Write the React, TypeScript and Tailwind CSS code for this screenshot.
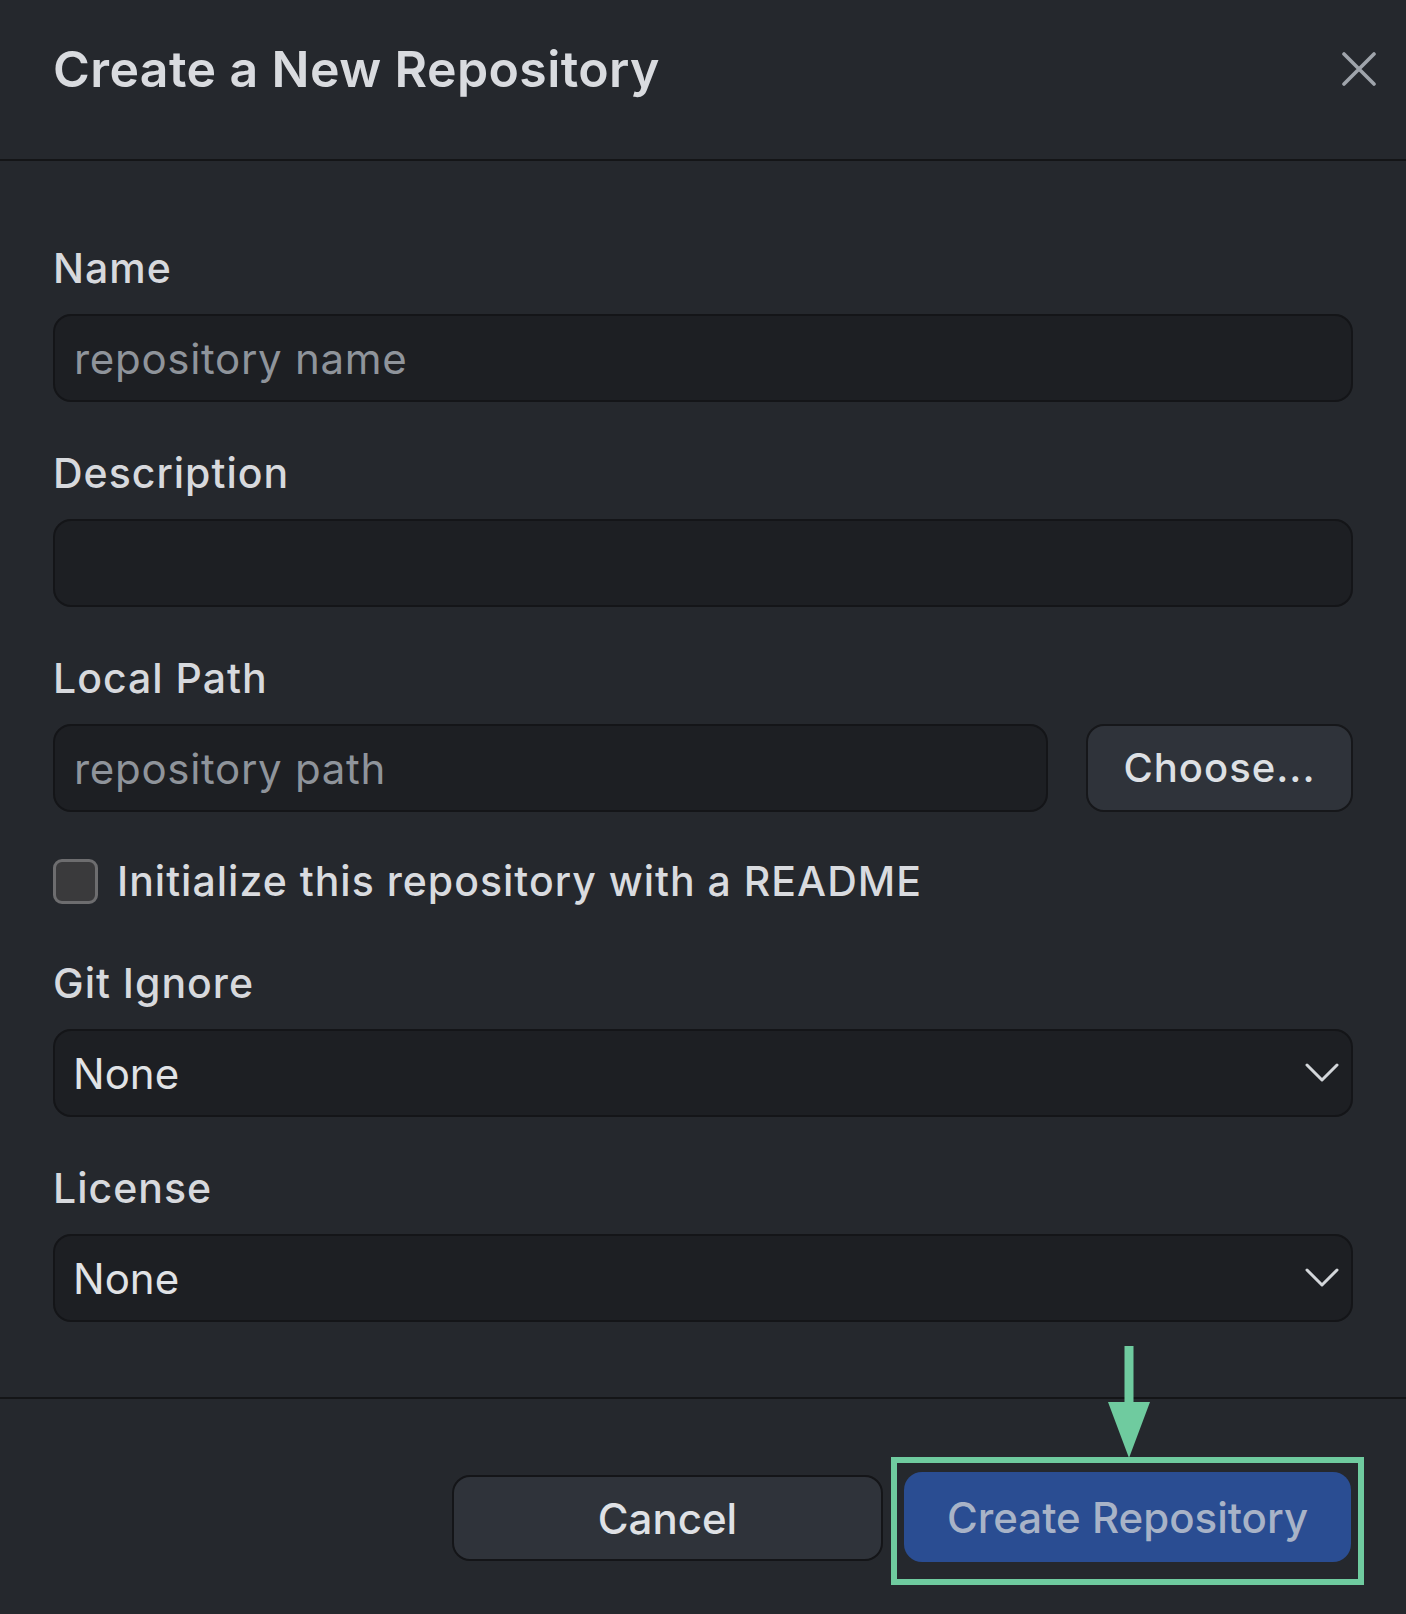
import React from "react";

const font = { fontFamily: "Inter, 'Liberation Sans', sans-serif" };

function Field({ label, children }: { label: string; children: React.ReactNode }) {
  return (
    <div className="flex flex-col">
      <label className="text-[41px] leading-[48px] font-medium tracking-[1px] text-[#d7d9dd]">{label}</label>
      <div className="mt-[22px]">{children}</div>
    </div>
  );
}

function TextInput({ placeholder }: { placeholder?: string }) {
  return (
    <input
      placeholder={placeholder}
      className="w-full h-[88px] rounded-[18px] border-2 border-[#141518] bg-[#1d1f23] pl-[19px] text-[42px] tracking-[0.7px] text-[#dfe1e5] placeholder:text-[#8f949b] outline-none"
    />
  );
}

function Select({ value }: { value: string }) {
  return (
    <div className="flex items-center justify-between w-full h-[88px] rounded-[18px] border-2 border-[#141518] bg-[#1d1f23] pl-[18px] pr-[12px]">
      <span className="text-[42px] text-[#e1e3e6]">{value}</span>
      <svg width="34" height="20" viewBox="0 0 34 20" fill="none">
        <path d="M2 2 L17 17 L32 2" stroke="#d3d6da" strokeWidth="3" strokeLinecap="round" strokeLinejoin="round" />
      </svg>
    </div>
  );
}

export default function App() {
  return (
    <div style={font} className="w-[1406px] h-[1614px] bg-[#25282d] flex flex-col overflow-hidden">
      <div className="h-[159px] flex items-center justify-between pl-[53px] pr-[30px] pb-[21px] shrink-0">
        <h1 className="text-[50px] font-semibold text-[#d9dbdf] tracking-[0.4px]">Create a New Repository</h1>
        <button className="w-[34px] h-[34px] flex items-center justify-center">
          <svg width="34" height="34" viewBox="0 0 34 34" fill="none">
            <path d="M2 2 L32 32 M32 2 L2 32" stroke="#9fa4ab" strokeWidth="3.6" strokeLinecap="round" />
          </svg>
        </button>
      </div>
      <div className="h-[2px] bg-[#141517] shrink-0" />

      <div className="flex flex-col gap-[47px] px-[53px] pt-[83px] pb-[75px] shrink-0">
        <Field label="Name">
          <TextInput placeholder="repository name" />
        </Field>
        <Field label="Description">
          <TextInput />
        </Field>
        <div className="flex flex-col">
          <Field label="Local Path">
            <div className="flex gap-[38px]">
              <div className="flex-1">
                <TextInput placeholder="repository path" />
              </div>
              <button className="w-[267px] h-[88px] rounded-[18px] border-2 border-[#16171a] bg-[#2f333a] text-[40px] font-medium tracking-[1px] text-[#dde0e4]">
                Choose...
              </button>
            </div>
          </Field>
          <div className="flex items-center gap-[19px] mt-[46px] mb-[8px] h-[46px]">
            <div className="w-[45px] h-[45px] rounded-[9px] border-[3px] border-[#6d6d6f] bg-[#3a3a3c]" />
            <span className="text-[41px] leading-[46px] font-medium tracking-[1px] text-[#d9dbdf]">
              Initialize this repository with a README
            </span>
          </div>
        </div>
        <Field label="Git Ignore">
          <Select value="None" />
        </Field>
        <Field label="License">
          <Select value="None" />
        </Field>
      </div>

      <div className="h-[2px] bg-[#141517] shrink-0" />

      <div className="flex justify-end items-start pr-[42px] pt-[58px]">
        <button className="mt-[18px] w-[431px] h-[86px] rounded-[18px] border-2 border-[#141518] bg-[#2f333a] text-[42px] font-medium text-[#dfe1e5]">
          Cancel
        </button>
        <div className="relative ml-[8px] border-[6px] border-[#6fcb9f] pt-[9px] pb-[17px] px-[7px]">
          <button className="w-[447px] h-[90px] rounded-[18px] bg-[#2a4d92] text-[42px] font-medium text-[#a8b3c7]">
            Create Repository
          </button>
          <svg className="absolute left-[211px] top-[-117px]" width="42" height="112" viewBox="0 0 42 112" fill="none">
            <rect x="16.5" y="0" width="9" height="58" fill="#6fcb9f" />
            <path d="M0 56 L42 56 L21 112 Z" fill="#6fcb9f" />
          </svg>
        </div>
      </div>
    </div>
  );
}
